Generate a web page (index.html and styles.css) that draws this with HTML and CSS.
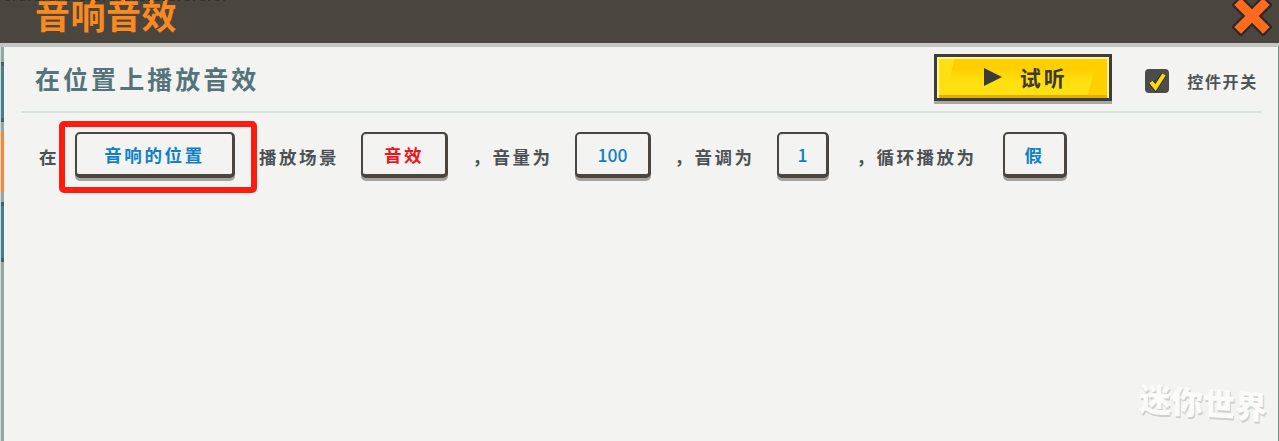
FILE: index.html
```html
<!DOCTYPE html>
<html lang="zh-CN">
<head>
    <meta charset="UTF-8">
    <title>音响音效</title>
    <link rel="stylesheet" href="styles.css">
</head>
<body>

<header class="top-bar">
    <h1 class="top-title">音响音效</h1>
    <svg class="close-icon" width="40" height="40" viewBox="0 0 40 40">
        <path class="close-cross" d="M9 9 L31 31 M31 9 L9 31"/>
        <path class="close-cross-fill" d="M9 9 L31 31 M31 9 L9 31"/>
    </svg>
</header>

<div class="page">
    <div class="side-strip">
        <div class="tab tab-grey tab-first"></div>
        <div class="tab tab-teal"></div>
        <div class="tab tab-grey tab-gap"></div>
        <div class="tab tab-orange"></div>
        <div class="tab tab-grey tab-gap"></div>
        <div class="tab tab-teal"></div>
        <div class="tab tab-grey tab-last"></div>
    </div>

    <main class="panel">
        <div class="panel-head">
            <h2 class="panel-title">在位置上播放音效</h2>
            <button class="try-btn">
                <svg width="18" height="18" viewBox="0 0 18 18"><path d="M0 0 L18 9 L0 18 Z" fill="#3c3a36"/></svg>
                <span>试听</span>
            </button>
            <div class="switch">
                <span class="check-box">
                    <svg width="24" height="24" viewBox="0 0 24 24">
                        <path class="tick-edge" d="M6 13 L10.500 18.500 L19 5.500"/>
                        <path class="tick" d="M6 13 L10.500 18.500 L19 5.500"/>
                    </svg>
                </span>
                <span class="switch-label">控件开关</span>
            </div>
        </div>

        <div class="block-row">
            <span class="word">在</span>
            <div class="mark-box">
                <button class="slot slot-pos">音响的位置</button>
            </div>
            <span class="word word-scene">播放场景</span>
            <button class="slot slot-sound">音效</button>
            <span class="word word-vol">，音量为</span>
            <button class="slot slot-vol">100</button>
            <span class="word word-pitch">，音调为</span>
            <button class="slot slot-pitch">1</button>
            <span class="word word-loop">，循环播放为</span>
            <button class="slot slot-loop">假</button>
        </div>

        <div class="watermark">迷你世界</div>
    </main>
</div>

</body>
</html>
```

FILE: styles.css
```css
html, body {
    margin: 0;
    height: 100%;
    overflow: hidden;
}

body {
    font-family: "Noto Sans CJK SC", "Noto Sans", sans-serif;
    background-color: #f3f3f1;
    display: flex;
    flex-direction: column;
}

button {
    font-family: inherit;
    cursor: pointer;
}

/* Top bar */
.top-bar {
    position: relative;
    flex: none;
    height: 43px;
    background-color: #4a463f;
    border-bottom: 4px solid #c4c4c1;
    display: flex;
    align-items: flex-end;
    padding-left: 35px;
    overflow: hidden;
}

/* bits of the window behind, only the bottom of its text shows */
.top-bar::before {
    content: "";
    position: absolute;
    top: 0;
    left: 5px;
    width: 225px;
    height: 1px;
    background: repeating-linear-gradient(90deg, #35332e 0 5px, transparent 5px 8px, #35332e 8px 10px, transparent 10px 15px);
}

.top-title {
    margin: 0 0 9px 0;
    font-size: 35px;
    line-height: 40px;
    font-weight: 700;
    letter-spacing: 0.5px;
    color: #fb8a1e;
    white-space: nowrap;
}

.close-icon {
    position: absolute;
    top: -4px;
    right: 7px;
}

.close-cross, .close-cross-fill {
    fill: none;
    stroke-linecap: square;
}

.close-cross {
    stroke: #2b2a27;
    stroke-width: 14;
}

.close-cross-fill {
    stroke: #ff6a1e;
    stroke-width: 9.500;
}

/* Left tabs */
.page {
    flex: 1;
    display: flex;
    min-height: 0;
}

.side-strip {
    flex: none;
    width: 3px;
    border-left: 1px solid #d5d6cf;
    display: flex;
    flex-direction: column;
}

.tab-grey {
    background-color: #8fa9a5;
}

.tab-first {
    height: 15px;
}

.tab-gap {
    height: 10px;
}

.tab-last {
    flex: 1;
}

.tab-teal {
    height: 60px;
    box-sizing: border-box;
    background-color: #437f8e;
    border-top: 4px solid #3f6470;
    border-bottom: 4px solid #3f6470;
}

.tab-orange {
    height: 60px;
    background-color: #f08a36;
}

/* Panel */
.panel {
    position: relative;
    flex: 1;
    padding: 0 17px 0 17px;
    background-color: #f3f3f1;
    border-right: 1px solid #7f8785;
}

.panel-head {
    height: 64px;
    display: flex;
    align-items: center;
    padding: 0 3px 0 14px;
    border-bottom: 2px solid #d5e3da;
}

.panel-title {
    margin: 0 auto 2px 0;
    font-size: 25px;
    line-height: 32px;
    font-weight: 700;
    letter-spacing: 3.050px;
    color: #54737a;
}

.try-btn {
    width: 178px;
    height: 47px;
    box-sizing: border-box;
    margin: 0 33px 3px 0;
    padding: 0 0 2px 5px;
    display: flex;
    align-items: center;
    justify-content: center;
    gap: 18px;
    font-size: 21px;
    line-height: 28px;
    font-weight: 700;
    letter-spacing: 3px;
    color: #3c3a36;
    border: 3px solid #3f3d39;
    box-shadow: 0 3px 0 #a8a8a5, inset 0 2px 0 #fff3a0, inset 2px 0 0 #fff3a0, inset -2px 0 0 #fff3a0, inset 0 -3px 0 #dfae06;
    background: linear-gradient(105deg, #ffe012 0 10%, transparent 10% 88%, #ffd000 88%),
        linear-gradient(to bottom, #ffcf00 0 30%, #ffe010 60%);
}

.switch {
    display: flex;
    align-items: center;
    gap: 18px;
    margin-top: 4px;
}

.check-box {
    width: 24px;
    height: 24px;
    border-radius: 4px;
    background-color: #4c4c4a;
    display: block;
}

.check-box svg {
    display: block;
}

.tick, .tick-edge {
    fill: none;
}

.tick-edge {
    stroke: #2e2d2a;
    stroke-width: 6;
}

.tick {
    stroke: #ffd90f;
    stroke-width: 4;
}

.switch-label {
    font-size: 16px;
    line-height: 22px;
    font-weight: 700;
    letter-spacing: 1.700px;
    color: #4f5557;
}

/* Block sentence */
.block-row {
    display: flex;
    align-items: center;
    padding: 8px 0 0 18px;
    color: #4d5153;
}

.word {
    font-size: 17.500px;
    line-height: 24px;
    font-weight: 700;
    letter-spacing: 2.500px;
    white-space: nowrap;
}

.word-scene {
    margin: 0 22px 0 2px;
}

.word-vol {
    margin: 0 22.500px 0 24.500px;
}

.word-pitch {
    margin: 0 22.500px 0 23.500px;
}

.word-loop {
    margin: 0 26.500px 0 27.500px;
}

.mark-box {
    box-sizing: border-box;
    width: 198px;
    height: 72px;
    padding: 5px 16px 0 10px;
    border: 6px solid #fe1b0f;
    border-radius: 5px;
}

.slot {
    display: block;
    box-sizing: border-box;
    height: 46px;
    margin-bottom: 4px;
    padding: 0;
    border: 2px solid #4a463f;
    border-right-width: 3px;
    border-bottom-width: 4px;
    border-radius: 5px;
    background-color: #f3f3f1;
    box-shadow: 0 3px 0 #a5a39d;
    font-size: 17.500px;
    font-weight: 700;
    letter-spacing: 2.600px;
    color: #0f80c8;
}

.mark-box .slot {
    margin-bottom: 0;
}

.slot-pos {
    width: 160px;
}

.slot-sound {
    width: 87px;
    color: #f0141e;
}

.slot-vol {
    width: 76px;
    font-weight: 500;
    letter-spacing: 0;
}

.slot-pitch {
    width: 52px;
    font-weight: 500;
    letter-spacing: 0;
}

.slot-loop {
    width: 64px;
}

/* Watermark in the corner */
.watermark {
    position: absolute;
    right: 11px;
    bottom: 18px;
    font-size: 32px;
    line-height: 44px;
    font-weight: 900;
    color: #fbfbfa;
    text-shadow: 1px 2px 0 #cfcfcc;
    transform: skewY(4deg);
    white-space: nowrap;
}
```
